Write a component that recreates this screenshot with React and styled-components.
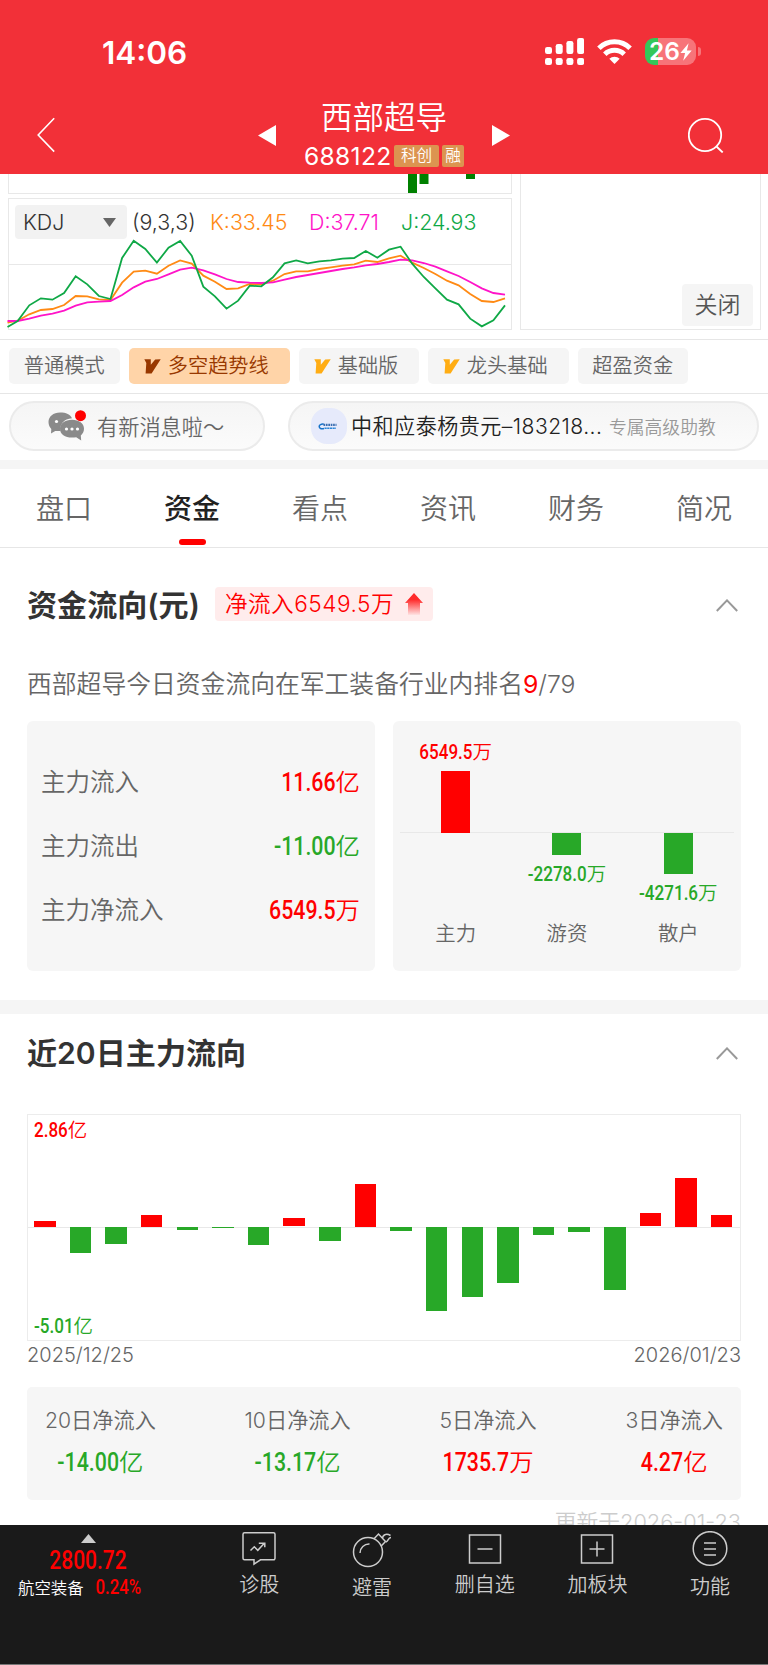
import styled, { createGlobalStyle } from "styled-components";

const RED = "#ff0000";
const GREEN = "#28a828";

const GlobalStyle = createGlobalStyle`
  * {
    box-sizing: border-box;
  }
  body {
    margin: 0;
    background: #fff;
    color: #333;
    font-family: Inter, "Noto Sans CJK SC", sans-serif;
    font-weight: 350;
  }
  svg {
    display: block;
    flex: none;
  }
`;

const Page = styled.div`
  width: 768px;
  height: 1665px;
  overflow: hidden;
  display: flex;
  flex-direction: column;
  background: #fff;
  white-space: nowrap;
`;

/* ---------- header ---------- */

const Header = styled.header`
  height: 174px;
  flex: none;
  background: #f23038;
  color: #fff;
`;

const StatusBar = styled.div`
  height: 96px;
  padding: 8px 67px 0 102px;
  display: flex;
  align-items: center;
  justify-content: space-between;
`;

const Clock = styled.span`
  font-size: 31.5px;
  font-weight: 600;
  line-height: 40px;
  margin-top: 2px;
`;

const StatusIcons = styled.div`
  display: flex;
  align-items: center;
  gap: 13px;
  margin-bottom: 1px;
`;

const Battery = styled.div`
  display: flex;
  align-items: center;
  gap: 2px;
`;

const BatteryBody = styled.div`
  width: 51px;
  height: 27px;
  padding-left: 4px;
  border-radius: 9px;
  display: flex;
  align-items: center;
  background: linear-gradient(to right, #34c759 13px, #f77479 13px);
  font-size: 24.5px;
  font-weight: 600;
  line-height: 27px;
`;

const BatteryNub = styled.div`
  width: 3px;
  height: 9px;
  border-radius: 0 4px 4px 0;
  background: #f77479;
`;

const NavBar = styled.div`
  height: 78px;
  padding: 0 44px 0 37px;
  display: flex;
  justify-content: space-between;
  align-items: flex-start;

  > svg {
    margin-top: 21px;
  }
`;

const StockSwitch = styled.div`
  display: flex;
  gap: 28px;
  margin-left: 25px;

  > svg {
    margin-top: 29px;
  }
`;

const StockName = styled.div`
  font-size: 31.5px;
  line-height: 44px;
  text-align: center;
`;

const StockCode = styled.div`
  width: 160px;
  display: flex;
  align-items: center;
  justify-content: space-between;
  height: 32px;
  font-size: 24.6px;
  font-weight: 400;
  letter-spacing: 0.3px;
`;

const Badges = styled.div`
  display: flex;
  gap: 3px;
`;

const Badge = styled.span`
  width: ${(p) => p.$w}px;
  height: 22px;
  border-radius: 2px;
  background: #dc9450;
  font-size: 15.6px;
  font-weight: 350;
  line-height: 22px;
  letter-spacing: 0;
  text-align: center;
`;

/* ---------- indicator charts ---------- */

const Charts = styled.section`
  height: 165px;
  flex: none;
  display: flex;
  gap: 8px;
  padding: 0 7px 0 8px;
`;

const ChartColumn = styled.div`
  width: 504px;
  display: flex;
  flex-direction: column;
  gap: 4px;
`;

const VolumeBox = styled.div`
  height: 20px;
  border: 1px solid #e8e8e8;
  border-top: 0;
`;

const KdjBox = styled.div`
  position: relative;
  height: 132px;
  border: 1px solid #e8e8e8;
`;

const KdjPlot = styled.svg`
  position: absolute;
  left: -1px;
  top: -1px;
`;

const Legend = styled.div`
  position: relative;
  display: flex;
  align-items: center;
  height: 34px;
  margin: 6px 0 0 6px;
  font-size: 21.4px;
`;

const Select = styled.div`
  width: 112px;
  height: 34px;
  padding: 0 11px 0 8px;
  border-radius: 4px;
  background: #f2f2f2;
  display: flex;
  align-items: center;
  justify-content: space-between;
`;

const Param = styled.span`
  color: ${(p) => p.$color};
  margin-left: ${(p) => p.$gap}px;
  width: ${(p) => p.$w}px;
`;

const SidePanel = styled.div`
  flex: 1;
  height: 156px;
  padding: 0 7px 3px 0;
  border: 1px solid #e8e8e8;
  border-top: 0;
  display: flex;
  align-items: flex-end;
  justify-content: flex-end;
`;

const CloseButton = styled.div`
  width: 71px;
  height: 42px;
  border-radius: 4px;
  background: #f5f5f5;
  color: #555;
  font-size: 23px;
  line-height: 42px;
  text-align: center;
`;

/* ---------- mode chips, messages ---------- */

const Modes = styled.section`
  height: 55px;
  flex: none;
  padding: 8px 9px 0;
  border-top: 1px solid #e6e6e6;
  border-bottom: 1px solid #e6e6e6;
  display: flex;
  gap: 9px;
`;

const Chip = styled.div`
  width: ${(p) => p.$w}px;
  height: 36px;
  border-radius: 5px;
  background: ${(p) => (p.$active ? "#ffd4a8" : "#f5f5f5")};
  color: ${(p) => (p.$active ? "#983800" : "#666")};
  display: flex;
  align-items: center;
  justify-content: center;
  font-size: 20.2px;
  line-height: 34px;

  svg {
    margin: 0 7px 0 -6px;
  }
`;

const Messages = styled.section`
  height: 66px;
  flex: none;
  padding: 7px 9px 0;
  display: flex;
  justify-content: space-between;
`;

const Pill = styled.div`
  width: ${(p) => p.$w}px;
  height: 50px;
  padding-left: ${(p) => p.$pad}px;
  border: 2px solid #ebebeb;
  border-radius: 25px;
  background: linear-gradient(#f5f5f5, #fbfbfb);
  display: flex;
  align-items: center;
  color: #666;
  font-size: 21.2px;
`;

const PillText = styled.span`
  margin: 0 0 2px 11px;
`;

const Advisor = styled.span`
  margin: 0 0 2px 4px;
  width: 252px;
  color: #222;
  font-size: 21.1px;
  letter-spacing: 0.45px;
`;

const AdvisorRole = styled.span`
  margin-left: 6px;
  margin-bottom: 1px;
  color: #999;
  font-size: 17.8px;
`;

const Band = styled.div`
  height: ${(p) => p.$h}px;
  flex: none;
  background: #f5f5f5;
`;

const Tabs = styled.nav`
  height: 79px;
  flex: none;
  display: grid;
  grid-template-columns: repeat(6, 1fr);
  border-bottom: 1px solid #e6e6e6;
`;

const Tab = styled.div`
  display: flex;
  flex-direction: column;
  align-items: center;
  padding-top: 19px;
  font-size: 28px;
  line-height: 42px;
  font-weight: ${(p) => (p.$active ? 500 : 350)};
  color: ${(p) => (p.$active ? "#222" : "#666")};

  &::after {
    content: "";
    width: 27px;
    height: 6px;
    margin-top: 9px;
    border-radius: 3px;
    background: ${(p) => (p.$active ? RED : "transparent")};
  }
`;

/* ---------- capital flow ---------- */

const Section = styled.section`
  height: ${(p) => p.$h}px;
  flex: none;
  padding: ${(p) => p.$top}px 27px 0;
`;

const SectionHead = styled.div`
  height: 36px;
  padding-right: 3px;
  display: flex;
  align-items: center;
  justify-content: space-between;
`;

const HeadLeft = styled.div`
  display: flex;
  align-items: center;
  gap: 15px;
`;

const Title = styled.h2`
  margin: 0;
  font-size: 30.1px;
  line-height: 36px;
  font-weight: 600;
`;

const InflowTag = styled.div`
  width: 218px;
  height: 34px;
  padding: 0 10px;
  border-radius: 4px;
  background: #ffecec;
  color: ${RED};
  display: flex;
  align-items: center;
  justify-content: space-between;
  margin-bottom: 2px;
  font-size: 22.6px;
  line-height: 34px;
  letter-spacing: 0.5px;
`;

const Rank = styled.p`
  margin: 0;
  height: 98px;
  padding-top: 43px;
  color: #666;
  font-size: 24.8px;
  line-height: 36px;

  em {
    color: ${RED};
    font-style: normal;
    font-weight: 400;
  }
`;

const Cards = styled.div`
  display: flex;
  gap: 18px;
`;

const Card = styled.div`
  width: 348px;
  height: 250px;
  border-radius: 6px;
  background: #f6f6f6;
`;

const TotalsCard = styled(Card)`
  padding: 27px 15px 0 14px;
`;

const TotalRow = styled.div`
  height: 64.4px;
  display: flex;
  align-items: center;
  justify-content: space-between;
  color: #666;
  font-size: 24.5px;
`;

const Amount = styled.span`
  color: ${(p) => (p.$down ? GREEN : RED)};
  font-size: ${(p) => p.$size || 24.4}px;
`;

// tall condensed figures
const Digits = styled.span`
  display: inline-block;
  font-family: Roboto, sans-serif;
  font-size: 0.875em;
  font-weight: 500;
  line-height: 1;
  transform: scaleY(1.2);
  transform-origin: 50% 84%;
`;

const PlayersCard = styled(Card)`
  padding: 0 7px;
`;

const PlayerColumns = styled.div`
  height: 191px;
  display: grid;
  grid-template-columns: repeat(3, 1fr);
  background: linear-gradient(#e8e8e8, #e8e8e8) 0 111px / 100% 1px no-repeat;
`;

const PlayerColumn = styled.div`
  display: flex;
  flex-direction: column;
  align-items: center;
  justify-content: ${(p) => (p.$down ? "flex-start" : "flex-end")};
  padding-top: ${(p) => (p.$down ? 112 : 0)}px;
  padding-bottom: ${(p) => (p.$down ? 0 : 79)}px;
  line-height: 30px;
  gap: 4px;
`;

const Bar = styled.div`
  flex: none;
  width: ${(p) => p.$w}px;
  background: ${(p) => (p.$down ? GREEN : RED)};
`;

const PlayerNames = styled.div`
  height: 44px;
  display: grid;
  grid-template-columns: repeat(3, 1fr);
  color: #666;
  font-size: 20.4px;
  line-height: 44px;
  text-align: center;
`;

/* ---------- 20 day history ---------- */

const History = styled.div`
  position: relative;
  height: 227px;
  margin-top: 43px;
  padding: 0 7.5px 0 6px;
  border: 1px solid #ececec;
  display: flex;
  justify-content: space-between;
  background: linear-gradient(#e8e8e8, #e8e8e8) 0 112px / 100% 1px no-repeat;
`;

const DayBar = styled(Bar)`
  align-self: flex-start;
`;

const Limit = styled.div`
  position: absolute;
  left: 6px;
  ${(p) => (p.$bottom ? "bottom: -1px;" : "top: 1px;")}
  line-height: 28px;
`;

const Dates = styled.div`
  display: flex;
  justify-content: space-between;
  height: 46px;
  color: #666;
  font-size: 20px;
  line-height: 29px;
`;

const Summary = styled.div`
  height: 113px;
  padding: 14px 18px 0;
  border-radius: 5px;
  background: #f6f6f6;
  display: flex;
  justify-content: space-between;
`;

const SummaryItem = styled.div`
  display: flex;
  flex-direction: column;
  align-items: center;
  color: #666;
  font-size: 21.2px;
  line-height: 38px;

  ${Amount} {
    line-height: 46px;
  }
`;

const Updated = styled.div`
  margin-top: 6px;
  color: #ccc;
  font-size: 21.8px;
  line-height: 32px;
  text-align: right;
`;

/* ---------- bottom bar ---------- */

const BottomBar = styled.footer`
  height: 140px;
  flex: none;
  background: #1a1a1a;
  border-bottom: 1px solid #777;
  color: #ccc;
  display: flex;
  padding-left: 16px;
`;

const Sector = styled.div`
  width: 187px;
  padding-top: 9px;

  > svg {
    margin-left: 65px;
  }
`;

const SectorPrice = styled.div`
  width: 144px;
  height: 34px;
  padding-top: 1px;
  line-height: 33px;
  text-align: center;
`;

const SectorName = styled.div`
  display: flex;
  gap: 12px;
  padding-left: 2px;
  height: 20px;
  align-items: center;
  color: #fff;
  font-size: 16.4px;
`;

const Action = styled.div`
  width: 112.7px;
  display: flex;
  flex-direction: column;
  align-items: center;
  padding-top: 6px;
  font-size: 20px;
  line-height: 30px;

  svg {
    margin-bottom: ${(p) => p.$gap || 0}px;
  }
`;

/* ---------- icons ---------- */

const SignalIcon = () => (
  <svg width="39" height="27" viewBox="0 0 39 27" fill="#fff">
    {[9, 6, 3, 0].map((top, i) => (
      <g key={i}>
        <rect x={i * 10.7} y={top} width="7" height={16 - top} rx="2.2" />
        <rect x={i * 10.7} y="20" width="7" height="7" rx="2.2" />
      </g>
    ))}
  </svg>
);

const WifiIcon = () => (
  <svg width="35" height="25" viewBox="0 0 35 25" fill="none" stroke="#fff" strokeWidth="5">
    <path d="M1.9 9.2a22.4 22.4 0 0 1 31.2 0" />
    <path d="M7.8 15.2a14 14 0 0 1 19.4 0" />
    <path d="M17.5 25l-5.2-5.3a7.6 7.6 0 0 1 10.4 0z" fill="#fff" stroke="none" />
  </svg>
);

const BoltIcon = () => (
  <svg width="12" height="18" viewBox="0 0 12 18" fill="#fff">
    <path d="M8.6 0.3 0.4 10h4.7L3.2 17.7 11.7 7.6H6.9z" />
  </svg>
);

const BackIcon = () => (
  <svg width="18" height="36" viewBox="0 0 18 36" fill="none" stroke="#fff" strokeWidth="1.6">
    <path d="M17.2 1.3 1.2 18l16 16.6" />
  </svg>
);

const SearchIcon = () => (
  <svg width="36" height="36" viewBox="0 0 36 36" fill="none" stroke="#fff" strokeWidth="1.8">
    <circle cx="17" cy="18" r="16.2" />
    <path d="M28.5 29.5l6.2 6" />
  </svg>
);

const Triangle = ({ w, h, d, fill = "#fff" }) => (
  <svg width={w} height={h} viewBox={`0 0 ${w} ${h}`} fill={fill}>
    <path d={d} />
  </svg>
);

const VipIcon = ({ color }) => (
  <svg width="17" height="15" viewBox="0 0 17 15" fill={color}>
    <path d="M0.3 0.3h6.500l0 5.500L11.2 0.500 16.700 0.300 7.600 14.400H1.600L2.300 3.900z" />
  </svg>
);

const ChatIcon = () => (
  <svg width="38" height="32" viewBox="0 0 38 32">
    <path
      d="M12 2.5C5.400 2.500 0.500 6.500 0.500 12c0 3 1.200 5.300 2.800 7l-0.300 4.500 4.200-2.500h5.300C11 15 16 8.500 24 8.200 22.500 4.500 18 2.500 12 2.500z"
      fill="#8a8a8a"
    />
    <path
      d="M24 9.700c7 0 12 3.600 12 9 0 2.800-1.200 5-3.200 6.700l0.400 5-5-3.200c-1.300 0.300-2.800 0.400-4.200 0.400-7 0-12-3.600-12-8.900s5-9 12-9z"
      fill="#8a8a8a"
    />
    <circle cx="8.500" cy="11.500" r="1.600" fill="#fff" />
    <circle cx="18.500" cy="19" r="1.600" fill="#fff" />
    <circle cx="24" cy="19" r="1.600" fill="#fff" />
    <circle cx="29.500" cy="19" r="1.600" fill="#fff" />
    <circle cx="32.500" cy="5.700" r="5.500" fill={RED} />
  </svg>
);

const AvatarIcon = () => (
  <svg width="36" height="36" viewBox="0 0 36 36">
    <rect width="36" height="36" rx="16" fill="#e6eafb" />
    <path d="M12.800 16.200c-2.600-0.400-4.600 0.600-4.600 2.300 0 1.800 2 2.700 4.800 2.100" fill="none" stroke="#1673c9" strokeWidth="1.500" />
    <path d="M12.500 16.800h13" stroke="#3a6db0" strokeWidth="2.200" strokeDasharray="1.700 0.700" />
    <path d="M13.500 20.300h11.500" stroke="#2a86d8" strokeWidth="1.600" strokeDasharray="2.200 0.500" />
  </svg>
);

const InflowIcon = () => (
  <svg width="18" height="22" viewBox="0 0 18 22">
    <defs>
      <linearGradient id="inflow" x1="0" y1="0" x2="0" y2="1">
        <stop offset="0.3" stopColor="#ff2a2a" />
        <stop offset="1" stopColor="#ff2a2a" stopOpacity="0.05" />
      </linearGradient>
    </defs>
    <path d="M9 0l9 10h-3v12H3V10H0z" fill="url(#inflow)" />
  </svg>
);

const ChevronUp = () => (
  <svg width="22" height="13" viewBox="0 0 22 13" fill="none" stroke="#999" strokeWidth="2">
    <path d="M0.800 12 11 1.400 21.200 12" />
  </svg>
);

const actionProps = { fill: "none", stroke: "#ccc", strokeWidth: 1.5 };

const DiagnoseIcon = () => (
  <svg width="36" height="36" viewBox="0 0 36 36" {...actionProps}>
    <path d="M3.500 1.800h29a1.500 1.500 0 0 1 1.500 1.500v24a1.500 1.500 0 0 1-1.500 1.500H19.500l-6.500 4.400v-4.400H3.500A1.500 1.500 0 0 1 2 27.300v-24a1.500 1.500 0 0 1 1.500-1.500z" />
    <path d="M9.500 19.500l3.800-3.700 3.500 3.500 6.500-7M17.800 12.300h6v4" />
  </svg>
);

const BombIcon = () => (
  <svg width="40" height="38" viewBox="0 0 40 38" {...actionProps}>
    <circle cx="16" cy="21" r="14.500" />
    <path d="M8 22a9 9 0 0 1 9.500-9M22 7.800l4.500-4.800 7 7.500-4.500 4.800M30.500 7.500c0-3.500 3.500-5.500 8-3M34 11c2.500-1 1.800-4 5-4.500" />
  </svg>
);

const BoxIcon = ({ plus }) => (
  <svg width="34" height="34" viewBox="0 0 34 34" {...actionProps}>
    <path d="M1.500 4h31v28h-31zM9.500 18h15" />
    {plus && <path d="M17 10.500v15" />}
  </svg>
);

const MenuIcon = () => (
  <svg width="36" height="36" viewBox="0 0 36 36" {...actionProps}>
    <circle cx="18" cy="17.500" r="16.800" />
    <path d="M12 12h12M12 18h12M12 24h12" />
  </svg>
);

/* ---------- data ---------- */

const J = [470, 452, 405, 384, 388, 368, 318, 342, 377, 386, 263, 211, 236, 277, 232, 212, 256, 349, 378, 415, 391, 346, 348, 321, 279, 270, 279, 273, 270, 265, 263, 242, 262, 238, 229, 280, 320, 354, 388, 402, 445, 468, 450, 405];
const K = [457, 451, 432, 419, 416, 404, 377, 378, 387, 389, 337, 304, 301, 310, 286, 270, 280, 316, 334, 356, 354, 341, 342, 331, 311, 303, 303, 296, 291, 286, 282, 271, 275, 264, 256, 277, 293, 311, 331, 345, 371, 392, 395, 384];
const D = [452, 452, 445, 436, 430, 421, 406, 396, 394, 392, 374, 351, 334, 326, 312, 298, 292, 300, 312, 326, 335, 337, 338, 336, 328, 320, 314, 308, 302, 296, 291, 285, 281, 275, 268, 270, 278, 289, 303, 317, 335, 354, 368, 373];

const toPoints = (ys) =>
  ys.map((y, i) => `${i === 0 ? -0.5 : (29 + (i - 1) * 34.81) / 3},${(y - 83) / 3}`).join(" ");

const days = [5.5, -26.5, -17, 11.5, -3, -0.6, -18.3, 8.7, -14, 42.5, -4.3, -84, -70, -56, -8.5, -5.3, -63, 13.3, 48.5, 11.5];

const totals = [
  ["主力流入", "11.66亿"],
  ["主力流出", "-11.00亿"],
  ["主力净流入", "6549.5万"],
];

const players = [
  { name: "主力", value: "6549.5万", height: 62 },
  { name: "游资", value: "-2278.0万", height: 22, down: true },
  { name: "散户", value: "-4271.6万", height: 41, down: true },
];

const summary = [
  ["20日净流入", "-14.00亿"],
  ["10日净流入", "-13.17亿"],
  ["5日净流入", "1735.7万"],
  ["3日净流入", "4.27亿"],
];

const tabs = ["盘口", "资金", "看点", "资讯", "财务", "简况"];

const Num = ({ value, size }) => {
  const [, digits, unit] = value.match(/^([-\d.%]+)(.*)$/);
  return (
    <Amount $size={size} $down={value.startsWith("-")}>
      <Digits>{digits}</Digits>
      {unit}
    </Amount>
  );
};

function App() {
  return (
    <Page>
      <GlobalStyle />
      <Header>
        <StatusBar>
          <Clock>14:06</Clock>
          <StatusIcons>
            <SignalIcon />
            <WifiIcon />
            <Battery>
              <BatteryBody>
                26
                <BoltIcon />
              </BatteryBody>
              <BatteryNub />
            </Battery>
          </StatusIcons>
        </StatusBar>
        <NavBar>
          <BackIcon />
          <StockSwitch>
            <Triangle w={18} h={21} d="M0 10.500 18 0v21z" />
            <div>
              <StockName>西部超导</StockName>
              <StockCode>
                688122
                <Badges>
                  <Badge $w={45}>科创</Badge>
                  <Badge $w={22}>融</Badge>
                </Badges>
              </StockCode>
            </div>
            <Triangle w={18} h={21} d="M18 10.500 0 0v21z" />
          </StockSwitch>
          <SearchIcon />
        </NavBar>
      </Header>

      <Charts>
        <ChartColumn>
          <VolumeBox>
            <svg width="502" height="19" fill="#008000">
              <path d="M399 0h9v19h-9zM410.500 0h9v10h-9zM457 0h9v5h-9z" />
            </svg>
          </VolumeBox>
          <KdjBox>
            <KdjPlot width="504" height="132" fill="none" strokeWidth="1.8" overflow="visible">
              <path d="M0 66.500h504" stroke="#e8e8e8" strokeWidth="1" />
              <polyline points={toPoints(K)} stroke="#ff8a14" />
              <polyline points={toPoints(D)} stroke="#ff14c8" />
              <polyline points={toPoints(J)} stroke="#0fa846" />
            </KdjPlot>
            <Legend>
              <Select>
                KDJ
                <Triangle w={13} h={9} d="M0 0h13L6.500 9z" fill="#666" />
              </Select>
              <Param $gap={5} $w={64}>(9,3,3)</Param>
              <Param $color="#ff8a14" $gap={14} $w={78}>K:33.45</Param>
              <Param $color="#ff14c8" $gap={21} $w={72}>D:37.71</Param>
              <Param $color="#0fa846" $gap={20} $w={74}>J:24.93</Param>
            </Legend>
          </KdjBox>
        </ChartColumn>
        <SidePanel>
          <CloseButton>关闭</CloseButton>
        </SidePanel>
      </Charts>

      <Modes>
        <Chip $w={110.5}>普通模式</Chip>
        <Chip $w={161.5} $active>
          <VipIcon color="#983800" />
          多空趋势线
        </Chip>
        <Chip $w={120}>
          <VipIcon color="#ffad14" />
          基础版
        </Chip>
        <Chip $w={140.5}>
          <VipIcon color="#ffad14" />
          龙头基础
        </Chip>
        <Chip $w={110.5}>超盈资金</Chip>
      </Modes>

      <Messages>
        <Pill $w={256} $pad={37}>
          <ChatIcon />
          <PillText>有新消息啦～</PillText>
        </Pill>
        <Pill $w={471} $pad={21}>
          <AvatarIcon />
          <Advisor>中和应泰杨贵元–183218...</Advisor>
          <AdvisorRole>专属高级助教</AdvisorRole>
        </Pill>
      </Messages>

      <Band $h={9} />

      <Tabs>
        {tabs.map((t, i) => (
          <Tab key={t} $active={i === 1}>
            {t}
          </Tab>
        ))}
      </Tabs>

      <Section $h={452} $top={39}>
        <SectionHead>
          <HeadLeft>
            <Title>资金流向(元)</Title>
            <InflowTag>
              净流入6549.5万
              <InflowIcon />
            </InflowTag>
          </HeadLeft>
          <ChevronUp />
        </SectionHead>
        <Rank>
          西部超导今日资金流向在军工装备行业内排名<em>9</em>/79
        </Rank>
        <Cards>
          <TotalsCard>
            {totals.map(([label, value]) => (
              <TotalRow key={label}>
                {label}
                <Num value={value} />
              </TotalRow>
            ))}
          </TotalsCard>
          <PlayersCard>
            <PlayerColumns>
              {players.map((p) => (
                <PlayerColumn key={p.name} $down={p.down}>
                  {!p.down && <Num size={19.5} value={p.value} />}
                  <Bar $w={29} $down={p.down} style={{ height: p.height }} />
                  {p.down && <Num size={19.5} value={p.value} />}
                </PlayerColumn>
              ))}
            </PlayerColumns>
            <PlayerNames>
              {players.map((p) => (
                <span key={p.name}>{p.name}</span>
              ))}
            </PlayerNames>
          </PlayersCard>
        </Cards>
      </Section>

      <Band $h={14} />

      <Section $h={511} $top={21}>
        <SectionHead>
          <Title>近20日主力流向</Title>
          <ChevronUp />
        </SectionHead>
        <History>
          {days.map((v, i) => (
            <DayBar
              key={i}
              $w={21.6}
              $down={v < 0}
              style={{ height: Math.abs(v), marginTop: v < 0 ? 111.5 : 111.5 - v }}
            />
          ))}
          <Limit>
            <Num size={19.5} value="2.86亿" />
          </Limit>
          <Limit $bottom>
            <Num size={19.5} value="-5.01亿" />
          </Limit>
        </History>
        <Dates>
          <span>2025/12/25</span>
          <span>2026/01/23</span>
        </Dates>
        <Summary>
          {summary.map(([label, value]) => (
            <SummaryItem key={label}>
              {label}
              <Num value={value} />
            </SummaryItem>
          ))}
        </Summary>
        <Updated>更新于2026-01-23</Updated>
      </Section>

      <BottomBar>
        <Sector>
          <Triangle w={15} h={9} d="M0 9 7.500 0 15 9z" fill="#ccc" />
          <SectorPrice>
            <Num size={24} value="2800.72" />
          </SectorPrice>
          <SectorName>
            航空装备
            <Num size={19.2} value="0.24%" />
          </SectorName>
        </Sector>
        <Action $gap={3}>
          <DiagnoseIcon />
          诊股
        </Action>
        <Action $gap={4}>
          <BombIcon />
          避雷
        </Action>
        <Action $gap={5}>
          <BoxIcon />
          删自选
        </Action>
        <Action $gap={5}>
          <BoxIcon plus />
          加板块
        </Action>
        <Action $gap={5}>
          <MenuIcon />
          功能
        </Action>
      </BottomBar>
    </Page>
  );
}

export default App;
